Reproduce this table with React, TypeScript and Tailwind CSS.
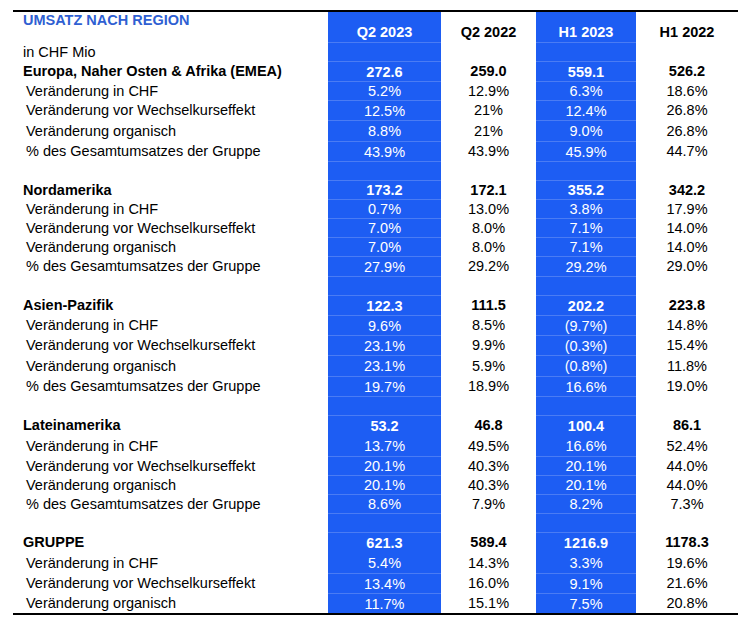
import React from "react";

type Row = {
  label?: string;
  bold?: boolean;
  sub?: boolean;
  vals?: string[];
  h: string;
  noLine?: boolean;
};

const rows: Row[] = [
  { label: "Europa, Naher Osten & Afrika (EMEA)", bold: true, vals: ["272.6", "259.0", "559.1", "526.2"], h: "h-[20px]" },
  { label: "Veränderung in CHF", sub: true, vals: ["5.2%", "12.9%", "6.3%", "18.6%"], h: "h-[19px]" },
  { label: "Veränderung vor Wechselkurseffekt", sub: true, vals: ["12.5%", "21%", "12.4%", "26.8%"], h: "h-[20px]" },
  { label: "Veränderung organisch", sub: true, vals: ["8.8%", "21%", "9.0%", "26.8%"], h: "h-[21px]" },
  { label: "% des Gesamtumsatzes der Gruppe", sub: true, vals: ["43.9%", "43.9%", "45.9%", "44.7%"], h: "h-[20px]" },
  { h: "h-[19px]" },
  { label: "Nordamerika", bold: true, vals: ["173.2", "172.1", "355.2", "342.2"], h: "h-[19px]" },
  { label: "Veränderung in CHF", sub: true, vals: ["0.7%", "13.0%", "3.8%", "17.9%"], h: "h-[19px]" },
  { label: "Veränderung vor Wechselkurseffekt", sub: true, vals: ["7.0%", "8.0%", "7.1%", "14.0%"], h: "h-[19px]" },
  { label: "Veränderung organisch", sub: true, vals: ["7.0%", "8.0%", "7.1%", "14.0%"], h: "h-[19px]" },
  { label: "% des Gesamtumsatzes der Gruppe", sub: true, vals: ["27.9%", "29.2%", "29.2%", "29.0%"], h: "h-[20px]" },
  { h: "h-[19px]" },
  { label: "Asien-Pazifik", bold: true, vals: ["122.3", "111.5", "202.2", "223.8"], h: "h-[20px]" },
  { label: "Veränderung in CHF", sub: true, vals: ["9.6%", "8.5%", "(9.7%)", "14.8%"], h: "h-[20px]" },
  { label: "Veränderung vor Wechselkurseffekt", sub: true, vals: ["23.1%", "9.9%", "(0.3%)", "15.4%"], h: "h-[20px]" },
  { label: "Veränderung organisch", sub: true, vals: ["23.1%", "5.9%", "(0.8%)", "11.8%"], h: "h-[21px]" },
  { label: "% des Gesamtumsatzes der Gruppe", sub: true, vals: ["19.7%", "18.9%", "16.6%", "19.0%"], h: "h-[20px]" },
  { h: "h-[19px]" },
  { label: "Lateinamerika", bold: true, vals: ["53.2", "46.8", "100.4", "86.1"], h: "h-[20px]" },
  { label: "Veränderung in CHF", sub: true, vals: ["13.7%", "49.5%", "16.6%", "52.4%"], h: "h-[21px]", noLine: true },
  { label: "Veränderung vor Wechselkurseffekt", sub: true, vals: ["20.1%", "40.3%", "20.1%", "44.0%"], h: "h-[19px]" },
  { label: "Veränderung organisch", sub: true, vals: ["20.1%", "40.3%", "20.1%", "44.0%"], h: "h-[19px]" },
  { label: "% des Gesamtumsatzes der Gruppe", sub: true, vals: ["8.6%", "7.9%", "8.2%", "7.3%"], h: "h-[19px]" },
  { h: "h-[19px]" },
  { label: "GRUPPE", bold: true, vals: ["621.3", "589.4", "1216.9", "1178.3"], h: "h-[20px]" },
  { label: "Veränderung in CHF", sub: true, vals: ["5.4%", "14.3%", "3.3%", "19.6%"], h: "h-[21px]", noLine: true },
  { label: "Veränderung vor Wechselkurseffekt", sub: true, vals: ["13.4%", "16.0%", "9.1%", "21.6%"], h: "h-[20px]" },
  { label: "Veränderung organisch", sub: true, vals: ["11.7%", "15.1%", "7.5%", "20.8%"], h: "h-[20px]" },
];

const colW = ["w-[113px]", "w-[95px]", "w-[100px]", "w-[102px]"];
const blue = [true, false, true, false];

function Cell({ i, children, bold, line }: { i: number; children?: React.ReactNode; bold?: boolean; line: boolean }) {
  const isBlue = blue[i];
  return (
    <div
      className={[
        colW[i],
        "flex items-center justify-center",
        isBlue ? "bg-[#1d5df3] text-white" : "text-black",
        isBlue && line ? "border-t border-[#4a7cf4]" : "",
        bold ? "font-bold" : "",
      ].join(" ")}
    >
      {children}
    </div>
  );
}

export default function App() {
  return (
    <div
      className="w-[745px] h-[622px] bg-white pt-[10px] pl-[13px]"
      style={{ fontFamily: '"Liberation Sans", Arial, sans-serif' }}
    >
      <div className="w-[725px] border-t-2 border-b-2 border-black text-[14.5px] leading-[16px]">
        {/* header row */}
        <div className="flex h-[30px]">
          <div className="w-[315px] pl-[10px] font-bold text-[#2f5fd2]">UMSATZ NACH REGION</div>
          {["Q2 2023", "Q2 2022", "H1 2023", "H1 2022"].map((t, i) => (
            <div
              key={t}
              className={[
                colW[i],
                "flex items-end justify-center pb-[2px] font-bold",
                blue[i] ? "bg-[#1d5df3] text-white" : "text-black",
              ].join(" ")}
            >
              {t}
            </div>
          ))}
        </div>
        {/* unit row */}
        <div className="flex h-[19px]">
          <div className="w-[315px] pl-[10px] flex items-center">in CHF Mio</div>
          {[0, 1, 2, 3].map((i) => (
            <Cell key={i} i={i} line />
          ))}
        </div>
        {rows.map((r, idx) => (
          <div key={idx} className={["flex", r.h].join(" ")}>
            <div
              className={[
                "w-[315px] flex items-center whitespace-nowrap",
                r.sub ? "pl-[13px]" : "pl-[10px]",
                r.bold ? "font-bold" : "",
              ].join(" ")}
            >
              {r.label}
            </div>
            {[0, 1, 2, 3].map((i) => (
              <Cell key={i} i={i} bold={r.bold} line={!r.noLine}>
                {r.vals ? r.vals[i] : null}
              </Cell>
            ))}
          </div>
        ))}
      </div>
    </div>
  );
}
